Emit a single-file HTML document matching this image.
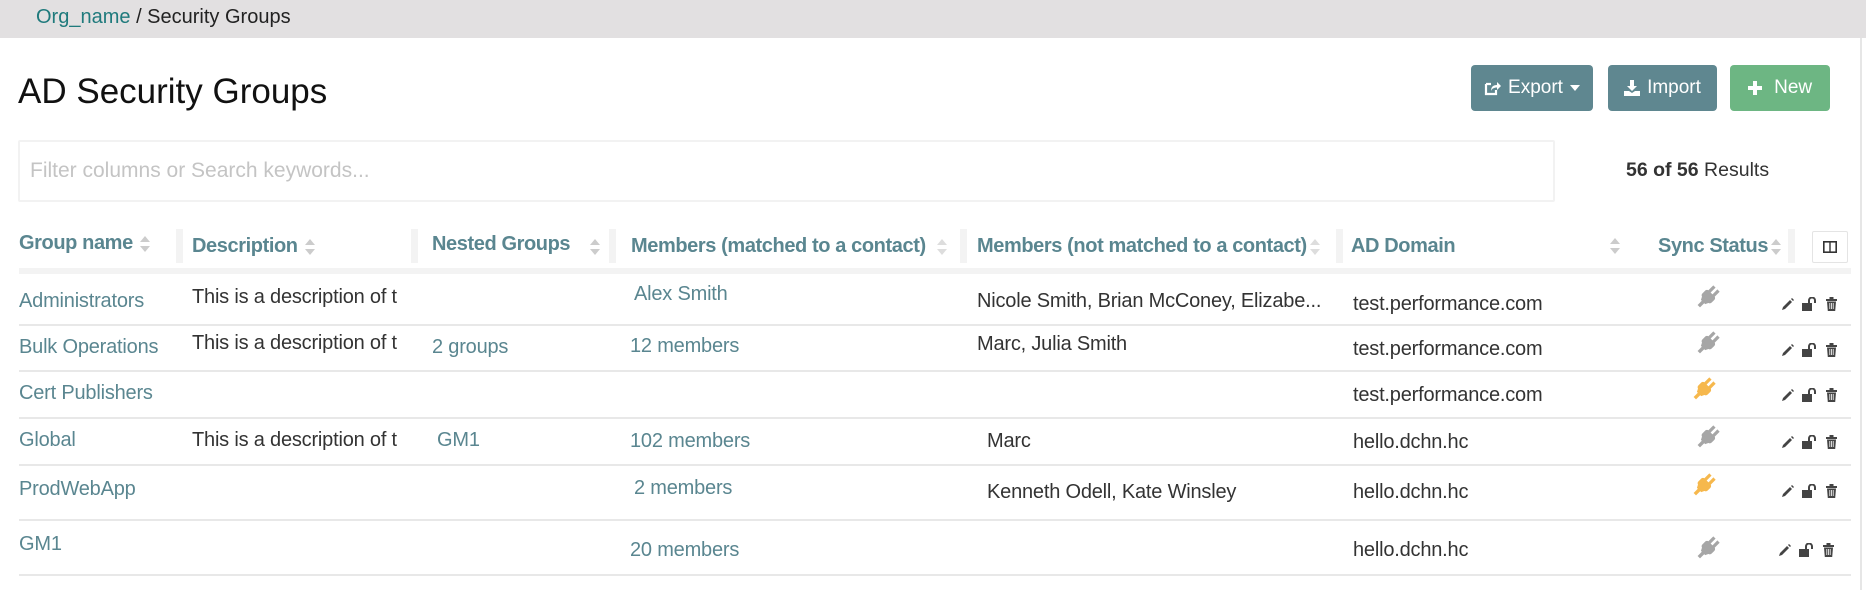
<!DOCTYPE html>
<html><head><meta charset="utf-8"><style>
*{margin:0;padding:0;box-sizing:border-box}
body{width:1866px;height:590px;overflow:hidden;background:#fff;font-family:"Liberation Sans",Arial,sans-serif;position:relative;color:#333}
.a{position:absolute;white-space:nowrap}
.bc{left:0;top:0;width:1866px;height:38px;background:#e2e0e1}
.btn{position:absolute;top:65px;height:46px;border-radius:4px;color:#fff;font-size:19px;display:flex;align-items:center;justify-content:center;gap:7px}
.th{font-weight:bold;color:#5a8690;font-size:20px;letter-spacing:-0.4px;display:flex;align-items:center}
.th svg{margin-left:6px}
.sep{position:absolute;top:229px;width:7px;height:34px;background:#f3f3f3}
.ln{position:absolute;left:19px;width:1832px;height:2px;background:#e8e8e8}
.lk{color:#5a8690;font-size:20px;letter-spacing:-0.2px}
.tx{color:#333;font-size:20px;letter-spacing:-0.2px}
</style></head><body>
<div class="a bc"></div>
<div class="a" style="left:36px;top:6px;font-size:20px;color:#1f7a7c">Org_name <span style="color:#222">/ Security Groups</span></div>
<div class="a" style="left:18px;top:72px;font-size:35px;color:#111">AD Security Groups</div>

<div class="btn" style="left:1471px;width:122px;background:#5f8790">
<svg width="17" height="15" viewBox="0 0 17 15"><path d="M2 3h5M2 3v10h10v-4" stroke="#fff" stroke-width="2.2" fill="none"/><path d="M7 10c0-4 2-6 6-6V1l4 4-4 4V6.5c-3 0-5 1-6 3.5z" fill="#fff"/></svg>Export<svg width="10" height="6"><path d="M0 0h10L5 6z" fill="#fff"/></svg></div>
<div class="btn" style="left:1608px;width:109px;background:#5f8790">
<svg width="16" height="16" viewBox="0 0 16 16"><path d="M6 0h4v6h3l-5 5-5-5h3z" fill="#fff"/><path d="M0 11h5l3 2 3-2h5v5H0z" fill="#fff"/></svg>Import</div>
<div class="btn" style="left:1730px;width:100px;background:#6db683">
<svg width="14" height="14"><path d="M5 0h4v5h5v4H9v5H5V9H0V5h5z" fill="#fff"/></svg>&nbsp;New</div>

<div class="a" style="left:18px;top:140px;width:1537px;height:62px;border:2px solid #f2f2f2;border-radius:2px"></div>
<div class="a" style="left:30px;top:159px;font-size:21px;color:#c4c4c4">Filter columns or Search keywords...</div>
<div class="a" style="left:1626px;top:159px;font-size:19.5px;color:#333"><b>56 of 56</b> Results</div>
<div class="a" style="left:1860px;top:38px;width:2px;height:552px;background:#e6e6e6"></div>

<!-- header -->
<div class="sep" style="left:176px"></div><div class="sep" style="left:411px"></div><div class="sep" style="left:609px"></div><div class="sep" style="left:960px"></div><div class="sep" style="left:1336px"></div><div class="sep" style="left:1788px"></div>
<div class="a th" style="left:19px;top:232px">Group name<svg width="12" height="20" viewBox="0 0 12 20"><path d="M1 8L6 2l5 6zM1 12l5 6 5-6z" fill="#ccc"/></svg></div>
<div class="a th" style="left:192px;top:235px">Description<svg width="12" height="20" viewBox="0 0 12 20"><path d="M1 8L6 2l5 6zM1 12l5 6 5-6z" fill="#ccc"/></svg></div>
<div class="a th" style="left:432px;top:233px">Nested Groups</div>
<svg class="a" style="left:589px;top:237px" width="12" height="20" viewBox="0 0 12 20"><path d="M1 8L6 2l5 6zM1 12l5 6 5-6z" fill="#ccc"/></svg>
<div class="a th" style="left:631px;top:235px">Members (matched to a contact)<svg width="12" height="20" viewBox="0 0 12 20" style="margin-left:10px"><path d="M1 8L6 2l5 6zM1 12l5 6 5-6z" fill="#ddd"/></svg></div>
<div class="a th" style="left:977px;top:235px">Members (not matched to a contact)<svg width="12" height="20" viewBox="0 0 12 20" style="margin-left:2px"><path d="M1 8L6 2l5 6zM1 12l5 6 5-6z" fill="#ddd"/></svg></div>
<div class="a th" style="left:1351px;top:235px">AD Domain</div>
<svg class="a" style="left:1609px;top:236px" width="12" height="20" viewBox="0 0 12 20"><path d="M1 8L6 2l5 6zM1 12l5 6 5-6z" fill="#ccc"/></svg>
<div class="a th" style="left:1658px;top:235px">Sync Status<svg width="12" height="20" viewBox="0 0 12 20" style="margin-left:2px"><path d="M1 8L6 2l5 6zM1 12l5 6 5-6z" fill="#ccc"/></svg></div>
<div class="a" style="left:1812px;top:231px;width:36px;height:32px;border:1px solid #e4e4e4;border-radius:2px"></div>
<svg class="a" style="left:1823px;top:241px" width="14" height="12"><rect x="0.8" y="0.8" width="12.4" height="10.4" fill="none" stroke="#333" stroke-width="1.6"/><path d="M7 1v10" stroke="#333" stroke-width="1.4"/></svg>
<div class="a" style="left:19px;top:268px;width:1832px;height:6px;background:#f3f3f3"></div>

<!-- rows -->
<div class="ln" style="top:324px"></div><div class="ln" style="top:370px"></div><div class="ln" style="top:417px"></div><div class="ln" style="top:464px"></div><div class="ln" style="top:519px"></div><div class="ln" style="top:574px"></div>

<div class="a lk" style="left:19px;top:290px">Administrators</div>
<div class="a tx" style="left:192px;top:286px">This is a description of t</div>
<div class="a lk" style="left:634px;top:283px">Alex Smith</div>
<div class="a tx" style="left:977px;top:290px">Nicole Smith, Brian McConey, Elizabe...</div>
<div class="a tx" style="left:1353px;top:293px">test.performance.com</div>

<div class="a lk" style="left:19px;top:336px">Bulk Operations</div>
<div class="a tx" style="left:192px;top:332px">This is a description of t</div>
<div class="a lk" style="left:432px;top:336px">2 groups</div>
<div class="a lk" style="left:630px;top:335px">12 members</div>
<div class="a tx" style="left:977px;top:333px">Marc, Julia Smith</div>
<div class="a tx" style="left:1353px;top:338px">test.performance.com</div>

<div class="a lk" style="left:19px;top:382px">Cert Publishers</div>
<div class="a tx" style="left:1353px;top:384px">test.performance.com</div>

<div class="a lk" style="left:19px;top:429px">Global</div>
<div class="a tx" style="left:192px;top:429px">This is a description of t</div>
<div class="a lk" style="left:437px;top:429px">GM1</div>
<div class="a lk" style="left:630px;top:430px">102 members</div>
<div class="a tx" style="left:987px;top:430px">Marc</div>
<div class="a tx" style="left:1353px;top:431px">hello.dchn.hc</div>

<div class="a lk" style="left:19px;top:478px">ProdWebApp</div>
<div class="a lk" style="left:634px;top:477px">2 members</div>
<div class="a tx" style="left:987px;top:481px">Kenneth Odell, Kate Winsley</div>
<div class="a tx" style="left:1353px;top:481px">hello.dchn.hc</div>

<div class="a lk" style="left:19px;top:533px">GM1</div>
<div class="a lk" style="left:630px;top:539px">20 members</div>
<div class="a tx" style="left:1353px;top:539px">hello.dchn.hc</div>

<!-- icons -->
<svg width="0" height="0" style="position:absolute"><defs>
<g id="plug"><g transform="rotate(45 14 14)"><rect x="7.5" y="9" width="13" height="9" rx="2.5"/><rect x="9.5" y="2" width="3.2" height="8"/><rect x="15.3" y="2" width="3.2" height="8"/><path d="M8.5 16h11l-2.5 5h-6z"/><rect x="12.3" y="20" width="3.4" height="7"/></g></g>
<g id="act">
<path d="M2 13l1-3 7-7 2 2-7 7zM11 2l1-1 2 2-1 1z" fill="#444"/>
<g transform="translate(22,0)"><rect x="0" y="6" width="10" height="8" fill="#444"/><path d="M7 6V3.5a3 3 0 016 0V6" stroke="#444" stroke-width="2" fill="none"/></g>
<g transform="translate(46,0)"><path d="M0 2h11v2H0zM3.5 0h4v2h-4zM1 4.5h9l-.8 9.5H1.8z" fill="#444"/><path d="M3.8 6v6M5.5 6v6M7.2 6v6" stroke="#fff" stroke-width="0.8"/></g>
</g></defs></svg>
<svg class="a" style="left:1694px;top:283px" width="28" height="28" fill="#a6a6a6"><use href="#plug"/></svg>
<svg class="a" style="left:1694px;top:329px" width="28" height="28" fill="#a6a6a6"><use href="#plug"/></svg>
<svg class="a" style="left:1690px;top:375px" width="28" height="28" fill="#f6b84d"><use href="#plug"/></svg>
<svg class="a" style="left:1694px;top:423px" width="28" height="28" fill="#a6a6a6"><use href="#plug"/></svg>
<svg class="a" style="left:1690px;top:471px" width="28" height="28" fill="#f6b84d"><use href="#plug"/></svg>
<svg class="a" style="left:1694px;top:534px" width="28" height="28" fill="#a6a6a6"><use href="#plug"/></svg>

<svg class="a" style="left:1780px;top:297px" width="60" height="16"><use href="#act"/></svg>
<svg class="a" style="left:1780px;top:343px" width="60" height="16"><use href="#act"/></svg>
<svg class="a" style="left:1780px;top:388px" width="60" height="16"><use href="#act"/></svg>
<svg class="a" style="left:1780px;top:435px" width="60" height="16"><use href="#act"/></svg>
<svg class="a" style="left:1780px;top:484px" width="60" height="16"><use href="#act"/></svg>
<svg class="a" style="left:1777px;top:543px" width="60" height="16"><use href="#act"/></svg>
</body></html>
